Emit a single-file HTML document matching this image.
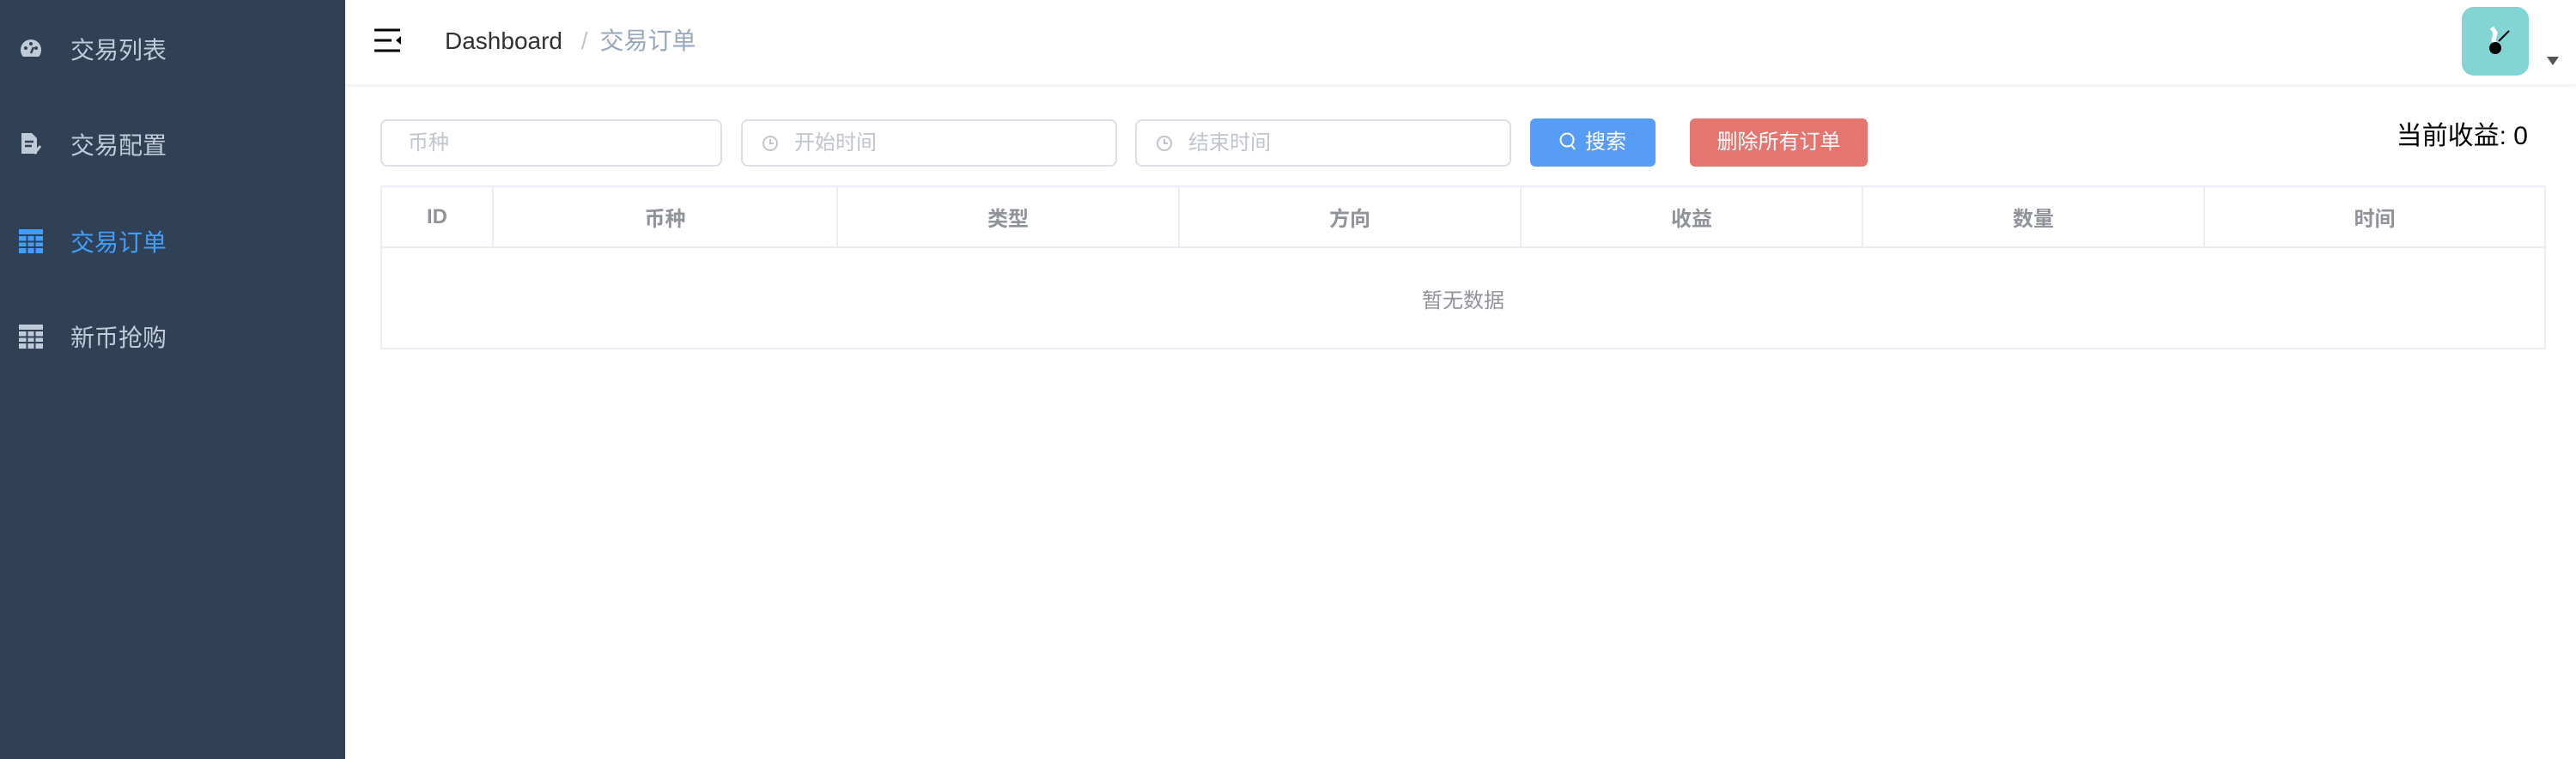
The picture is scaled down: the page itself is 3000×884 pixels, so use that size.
<!DOCTYPE html>
<html><head><meta charset="utf-8"><style>
*{margin:0;padding:0;box-sizing:border-box}
body{width:3000px;height:884px;position:relative;background:#fff;font-family:"Liberation Sans","Noto Sans CJK SC",sans-serif;overflow:hidden}
.side{position:absolute;left:0;top:0;width:402px;height:884px;background:#304156}
.mi{position:absolute;left:0;width:402px;height:112px;color:#bfcbd9;font-size:28px}
.mi span{position:absolute;left:82px;top:50%;transform:translateY(-50%)}
.mi svg{position:absolute;left:22px;top:50%;transform:translateY(-50%)}
.hdr{position:absolute;left:402px;top:0;right:0;height:98px;box-shadow:0 2px 4px rgba(0,21,41,.08)}
.abs{position:absolute}
.inp{position:absolute;top:139px;height:55px;border:2px solid #dcdfe6;border-radius:8px;color:#c0c4cc;font-size:24px;line-height:51px}
table{position:absolute;left:443px;top:216px;width:2522px;height:191px;border-collapse:collapse;font-size:24px}
td,th{border:2px solid #ebeef5;text-align:center;color:#909399}
th{height:71px;font-weight:bold}
</style></head><body>
<div class="side">
 <div class="mi" style="top:1px"><svg width="28" height="28" viewBox="0 0 28 28"><path d="M14 3a12 12 0 0 0-12 12c0 3 1 6 3 8h18c2-2 3-5 3-8A12 12 0 0 0 14 3z" fill="#bfcbd9"/><circle cx="8" cy="13" r="2" fill="#304156"/><circle cx="14" cy="8" r="2" fill="#304156"/><circle cx="20" cy="13" r="2" fill="#304156"/><path d="M14 19l3-7" stroke="#304156" stroke-width="2.5"/></svg><span>交易列表</span></div>
 <div class="mi" style="top:112px"><svg width="30" height="30" viewBox="0 0 30 30"><path d="M3 2h12l6 6v18H3z" fill="#bfcbd9"/><path d="M7 12h10M7 17h8" stroke="#304156" stroke-width="2.5"/><path d="M18 26l7-9" stroke="#bfcbd9" stroke-width="3"/></svg><span>交易配置</span></div>
 <div class="mi" style="top:225px;color:#409eff"><svg width="28" height="28" viewBox="0 0 28 28"><rect width="28" height="28" fill="#409eff"/><path d="M0 7h28M0 14.5h28M0 21h28M9.5 7v21M18.5 7v21" stroke="#304156" stroke-width="2"/></svg><span>交易订单</span></div>
 <div class="mi" style="top:336px"><svg width="28" height="28" viewBox="0 0 28 28"><rect width="28" height="28" fill="#bfcbd9"/><path d="M0 7h28M0 14.5h28M0 21h28M9.5 7v21M18.5 7v21" stroke="#304156" stroke-width="2"/></svg><span>新币抢购</span></div>
</div>
<div class="hdr"></div>
<svg class="abs" style="left:436px;top:33px" width="32" height="28" viewBox="0 0 32 28"><path d="M0 2h30M0 14h20M0 26h30" stroke="#000" stroke-width="3"/><path d="M31 9l-6 5 6 5z" fill="#000"/></svg>
<div class="abs" style="left:518px;top:26px;font-size:28px;color:#303133">Dashboard <span style="color:#c0c4cc;margin:0 14px">/</span><span style="color:#97a8be">交易订单</span></div>
<div class="abs" style="left:2867px;top:8px;width:78px;height:80px;border-radius:14px;background:#83d4d4"></div>
<svg class="abs" style="left:2890px;top:28px" width="36" height="42" viewBox="0 0 36 42"><path d="M12 4l4 6-2 10 4 14" stroke="#fff" stroke-width="5" fill="none"/><circle cx="16" cy="28" r="7" fill="#000"/><path d="M20 20l12-12" stroke="#000" stroke-width="2"/></svg>
<div class="abs" style="left:2966px;top:66px;border-left:7px solid transparent;border-right:7px solid transparent;border-top:10px solid #555"></div>
<div class="inp" style="left:443px;width:398px;padding-left:30px">币种</div>
<div class="inp" style="left:863px;width:438px;padding-left:60px"><svg class="abs" style="left:22px;top:16px" width="20" height="20" viewBox="0 0 20 20"><circle cx="10" cy="10" r="8" stroke="#c0c4cc" stroke-width="2" fill="none"/><path d="M10 5v5h4" stroke="#c0c4cc" stroke-width="2" fill="none"/></svg>开始时间</div>
<div class="inp" style="left:1322px;width:438px;padding-left:60px"><svg class="abs" style="left:22px;top:16px" width="20" height="20" viewBox="0 0 20 20"><circle cx="10" cy="10" r="8" stroke="#c0c4cc" stroke-width="2" fill="none"/><path d="M10 5v5h4" stroke="#c0c4cc" stroke-width="2" fill="none"/></svg>结束时间</div>
<div class="abs" style="left:1782px;top:138px;width:146px;height:56px;background:#579df8;border-radius:6px;color:#fff;font-size:24px;line-height:56px;text-align:center"><svg style="vertical-align:-3px;margin-right:10px" width="20" height="22" viewBox="0 0 20 22"><circle cx="9" cy="9" r="7.5" stroke="#fff" stroke-width="2" fill="none"/><path d="M14 15l4 5" stroke="#fff" stroke-width="2"/></svg>搜索</div>
<div class="abs" style="left:1968px;top:138px;width:207px;height:56px;background:#e4766f;border-radius:6px;color:#fff;font-size:24px;line-height:56px;text-align:center">删除所有订单</div>
<div class="abs" style="right:56px;top:133px;font-size:30px;color:#000">当前收益: 0</div>
<table>
<tr><th style="width:130px">ID</th><th style="width:401px">币种</th><th style="width:398px">类型</th><th style="width:398px">方向</th><th style="width:398px">收益</th><th style="width:398px">数量</th><th>时间</th></tr>
<tr><td colspan="7" style="font-weight:normal">暂无数据</td></tr>
</table>
</body></html>
